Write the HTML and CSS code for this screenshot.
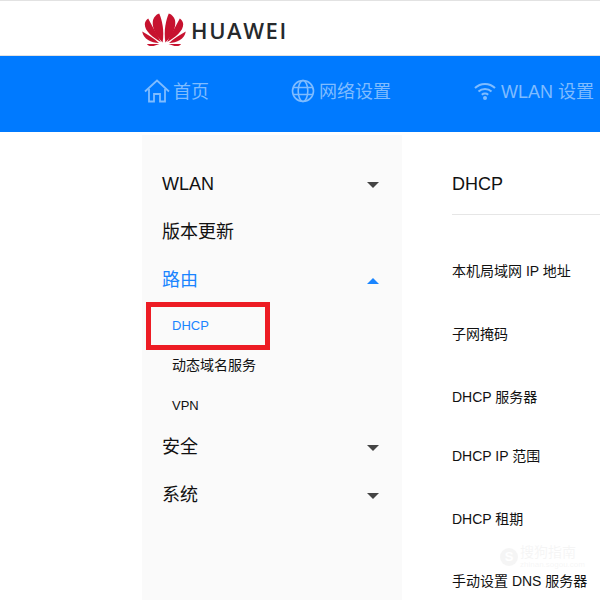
FILE: index.html
```html
<!DOCTYPE html>
<html lang="zh">
<head>
<meta charset="utf-8">
<title>HUAWEI</title>
<link rel="stylesheet" href="styles.css">
</head>
<body>
<header class="top">
  <svg class="logo" viewBox="0 0 44 33" width="44" height="33">
    <defs>
      <g id="petals">
        <path d="M20.600 29.500 C14 23 10 15 10.800 8.500 C11.300 4.500 14 1.500 17.200 0.500 C20 7 22.500 17 20.600 29.500Z"/>
        <path d="M18.800 29 C11 24.500 2.500 18 2.800 11 C3 8.500 4.500 6.500 6.200 5.500 C9.500 12 15 21 18.800 29Z"/>
        <path d="M17 30 C9 30 1.500 26 0.200 18.500 C5.500 21.500 12.500 25.500 17 30Z"/>
        <path d="M17.500 31 L5 31 C6 33 9 33.500 11.500 33 Z"/>
      </g>
    </defs>
    <g fill="#c7122f">
      <use href="#petals"/>
      <use href="#petals" transform="translate(44 0) scale(-1 1)"/>
    </g>
  </svg>
  <span class="brand">HUAWEI</span>
</header>
<nav class="nav">
  <a class="nav-item nav-home">
    <svg class="nav-icon" viewBox="0 0 26 24" width="26" height="24" fill="none" stroke="currentColor" stroke-width="1.800">
      <path d="M1 12.500 L13 1.500 L25 12.500"/>
      <path d="M5 10 V22.500 H10 V15 H16 V22.500 H21 V10"/>
    </svg>
    <span>首页</span>
  </a>
  <a class="nav-item nav-net">
    <svg class="nav-icon" viewBox="0 0 24 24" width="24" height="24" fill="none" stroke="currentColor" stroke-width="1.600">
      <circle cx="12" cy="12" r="10.500"/>
      <ellipse cx="12" cy="12" rx="4.800" ry="10.500"/>
      <path d="M2 8.500 H22 M2 15.500 H22"/>
    </svg>
    <span>网络设置</span>
  </a>
  <a class="nav-item nav-wlan">
    <svg class="nav-icon" viewBox="0 0 22 20" width="22" height="20" fill="none" stroke="currentColor" stroke-width="2">
      <path d="M1 7 C6.500 1.500 15.500 1.500 21 7"/>
      <path d="M4.500 10.500 C8 7 14 7 17.500 10.500"/>
      <path d="M7.800 13.800 C9.500 12.200 12.500 12.200 14.200 13.800"/>
      <circle cx="11" cy="17" r="2" fill="currentColor" stroke="none"/>
    </svg>
    <span>WLAN 设置</span>
  </a>
</nav>
<main class="layout">
  <aside class="side">
    <div class="side-row"><span class="latin">WLAN</span><i class="caret"></i></div>
    <div class="side-row"><span>版本更新</span></div>
    <div class="side-row active"><span>路由</span><i class="caret up"></i></div>
    <div class="subs">
      <div class="sub active">DHCP</div>
      <div class="sub cjk">动态域名服务</div>
      <div class="sub">VPN</div>
    </div>
    <div class="side-row"><span>安全</span><i class="caret"></i></div>
    <div class="side-row"><span>系统</span><i class="caret"></i></div>
    <div class="mark"></div>
  </aside>
  <section class="content">
    <h1 class="title">DHCP</h1>
    <div class="rows">
      <div class="row r1">本机局域网 IP 地址</div>
      <div class="row r2">子网掩码</div>
      <div class="row r3">DHCP 服务器</div>
      <div class="row r4">DHCP IP 范围</div>
      <div class="row r5">DHCP 租期</div>
      <div class="row r6">手动设置 DNS 服务器</div>
    </div>
    <div class="wm"><span class="wm-s">S</span><div class="wm-t"><span class="wm-cn">搜狗指南</span><span class="wm-en">zhinan.sogou.com</span></div></div>
  </section>
</main>
</body>
</html>
```
FILE: styles.css
```css
* { box-sizing: border-box; }
html, body { margin: 0; padding: 0; }
body {
  width: 600px;
  height: 600px;
  overflow: hidden;
  background: #fff;
  color: #111;
  font-family: "Liberation Sans", "Noto Sans CJK SC", sans-serif;
}
.top {
  height: 56px;
  border-top: 1px solid #e2e2e2;
  border-bottom: 1px solid #e2e2e2;
  padding: 11px 0 0 142px;
  display: flex;
  align-items: flex-start;
  gap: 5px;
}
.logo { display: block; margin-top: 1px; }
.brand {
  font-family: "Open Sans", "Liberation Sans", sans-serif;
  font-size: 22px;
  font-weight: 600;
  line-height: 36px;
  color: #26292c;
  letter-spacing: 1.600px;
}
.nav {
  height: 76px;
  background: #007aff;
  color: #7fbcff;
  display: flex;
  padding: 22px 0 0 144px;
  font-size: 18px;
  white-space: nowrap;
}
.nav-item { display: flex; align-items: center; height: 26px; }
.nav-item span { display: block; margin-bottom: 2px; }
.nav-icon { display: block; flex: none; }
.nav-home { gap: 3px; width: 147px; }
.nav-net { gap: 4px; width: 183px; }
.nav-wlan { gap: 5px; }
.layout { display: flex; height: 468px; padding-left: 142px; position: relative; }
.side {
  width: 260px;
  background: #fafafa;
  margin-top: 3px;
  padding: 23px 21px 0 20px;
  flex: none;
  position: relative;
}
.side-row {
  height: 48px;
  display: flex;
  align-items: center;
  justify-content: space-between;
  font-size: 18px;
  color: #111;
}
.side-row.active { color: #1a85ff; }
.latin { padding-top: 4px; }
.caret {
  width: 0;
  height: 0;
  border-left: 6px solid transparent;
  border-right: 6px solid transparent;
  border-top: 6px solid #444;
  margin: 5px 2px 0 0;
}
.caret.up {
  border-top: 0;
  border-bottom: 6px solid #1a85ff;
}
.subs { margin: 3px 0 -4px; }
.sub {
  height: 40px;
  padding-left: 10px;
  display: flex;
  align-items: center;
  font-size: 13px;
  color: #111;
}
.sub.cjk { font-size: 14px; padding-bottom: 2px; }
.sub.active { color: #1a85ff; }
.mark {
  position: absolute;
  left: 4px;
  top: 167px;
  width: 124px;
  height: 48px;
  border: 5px solid #ed1c24;
}
.content { flex: 1; padding-left: 50px; position: relative; min-width: 0; }
.title {
  margin: 0;
  height: 83px;
  padding-top: 40px;
  font-size: 18px;
  font-weight: 400;
  line-height: 24px;
  color: #111;
  border-bottom: 1px solid #e6e6e6;
}
.rows { display: block; }
.row { font-size: 14px; line-height: 18px; white-space: nowrap; color: #111; }
.r1 { margin-top: 47px; }
.r2 { margin-top: 45px; }
.r3 { margin-top: 45px; }
.r4 { margin-top: 41px; }
.r5 { margin-top: 45px; }
.r6 { margin-top: 44px; }
.wm {
  position: absolute;
  left: 98px;
  top: 412px;
  display: flex;
  align-items: center;
  gap: 2px;
  opacity: 0.05;
  color: #555;
}
.wm-s {
  width: 18px;
  height: 18px;
  border-radius: 50%;
  background: #555;
  color: #fff;
  font-size: 13px;
  font-weight: 700;
  line-height: 18px;
  text-align: center;
}
.wm-t { display: flex; flex-direction: column; }
.wm-cn { font-size: 14px; line-height: 16px; }
.wm-en { font-size: 8px; line-height: 9px; }
```
